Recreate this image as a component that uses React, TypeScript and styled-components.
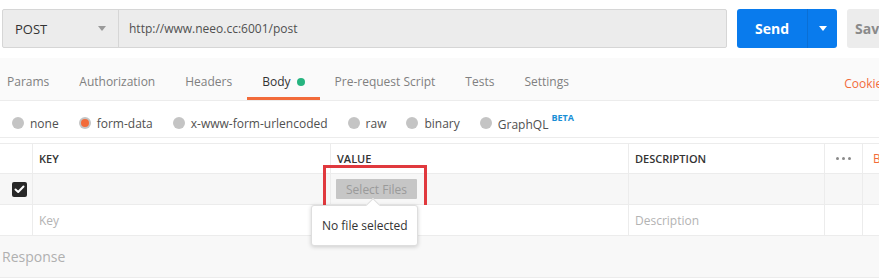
import React from 'react';
import styled, { createGlobalStyle } from 'styled-components';

const GlobalStyle = createGlobalStyle`
  html, body {
    margin: 0;
    padding: 0;
    overflow: hidden;
    background: #ffffff;
    font-family: "Open Sans", "Liberation Sans", sans-serif;
    font-size: 12px;
    color: #505050;
  }
`;

const Page = styled.div`
  width: 879px;
  height: 279px;
  overflow: hidden;
`;

const TopBar = styled.div`
  display: flex;
  align-items: flex-start;
  height: 58px;
  padding: 9px 0 0 2px;
  box-sizing: border-box;
  white-space: nowrap;

  & > * {
    flex-shrink: 0;
  }
`;

const UrlBox = styled.div`
  display: flex;
  width: 725px;
  height: 39px;
  box-sizing: border-box;
  border: 1px solid #d6d6d6;
  border-radius: 2px;
  background: #ececec;
`;

const MethodSelect = styled.div`
  display: flex;
  align-items: center;
  justify-content: space-between;
  width: 116px;
  padding: 0 12px 0 12px;
  box-sizing: border-box;
  border-right: 1px solid #d6d6d6;
  font-size: 13px;
  color: #333;
`;

const Caret = styled.span<{ $color: string }>`
  width: 0;
  height: 0;
  border-left: 4px solid transparent;
  border-right: 4px solid transparent;
  border-top: 5px solid ${(p) => p.$color};
`;

const UrlInput = styled.div`
  display: flex;
  align-items: center;
  padding-left: 10px;
  color: #505050;
`;

const SendButton = styled.div`
  display: flex;
  margin-left: 10px;
  width: 100px;
  height: 39px;
  border-radius: 3px;
  background: #097bed;
  color: #fff;
  overflow: hidden;
`;

const SendLabel = styled.div`
  display: flex;
  align-items: center;
  justify-content: center;
  width: 70px;
  font-size: 14px;
  font-weight: 700;
  border-right: 1px solid #0a6fd5;
`;

const SendArrow = styled.div`
  display: flex;
  flex: 1;
  align-items: center;
  justify-content: center;
`;

const SaveButton = styled.div`
  display: flex;
  align-items: center;
  margin-left: 10px;
  width: 80px;
  height: 39px;
  padding-left: 8px;
  box-sizing: border-box;
  border-radius: 3px;
  background: #ececec;
  color: #8a8a8a;
  font-size: 14px;
  font-weight: 700;
`;

const Tabs = styled.div`
  display: flex;
  height: 43px;
  box-sizing: border-box;
  background: #fafafa;
  border-bottom: 1px solid #ececec;
  white-space: nowrap;
`;

const TabList = styled.div`
  display: flex;
  margin-left: -8px;
`;

const Tab = styled.div<{ $active?: boolean }>`
  display: flex;
  align-items: center;
  gap: 6px;
  padding: 8px 15px 0;
  height: 42px;
  box-sizing: border-box;
  color: ${(p) => (p.$active ? '#333' : '#808080')};
  border-bottom: 3px solid ${(p) => (p.$active ? '#f26b3a' : 'transparent')};
`;

const Dot = styled.span`
  width: 8px;
  height: 8px;
  border-radius: 50%;
  background: #26b47f;
`;

const Cookies = styled.div`
  margin-left: auto;
  padding-top: 8px;
  display: flex;
  align-items: center;
  color: #f26b3a;
  margin-right: -9px;
`;

const RadioRow = styled.div`
  display: flex;
  align-items: center;
  gap: 20px;
  height: 37px;
  padding: 8px 0 0 12px;
  box-sizing: border-box;
  border-bottom: 1px solid #ececec;
  color: #505050;
  white-space: nowrap;
`;

const RadioItem = styled.label`
  display: flex;
  align-items: center;
  gap: 6px;
`;

const RadioCircle = styled.span<{ $checked?: boolean }>`
  display: flex;
  align-items: center;
  justify-content: center;
  width: 12px;
  height: 12px;
  border-radius: 50%;
  background: #c4c4c4;

  &::after {
    content: '';
    width: 8px;
    height: 8px;
    border-radius: 50%;
    background: ${(p) => (p.$checked ? '#f26b3a' : 'transparent')};
  }
`;

const Beta = styled.sup`
  margin-left: 3px;
  font-size: 9px;
  font-weight: 700;
  color: #1a8fd6;
  position: relative;
  top: -3px;
`;

const Table = styled.div`
  margin-top: 5px;
  display: grid;
  grid-template-columns: 32px 298px 298px 196px 38px 1fr;
  grid-template-rows: 30px 31px 31px;
  border-top: 1px solid #ececec;
`;

const Cell = styled.div<{ $first?: boolean; $shade?: boolean }>`
  position: relative;
  display: flex;
  align-items: center;
  padding-left: 6px;
  box-sizing: border-box;
  border-bottom: 1px solid #ececec;
  border-left: ${(p) => (p.$first ? 'none' : '1px solid #ececec')};
  background: ${(p) => (p.$shade ? '#f7f7f7' : '#ffffff')};
  white-space: nowrap;
`;

const HeadText = styled.span`
  font-size: 11px;
  font-weight: 600;
  color: #333;
`;

const Placeholder = styled.span`
  color: #b3b3b3;
`;

const Checkbox = styled.span`
  display: flex;
  align-items: center;
  justify-content: center;
  margin-left: 6px;
  width: 15px;
  height: 15px;
  border-radius: 2px;
  background: #282828;
`;

const Dots = styled.div`
  display: flex;
  gap: 3px;
  margin: 0 auto;
  transform: translateX(-3px);

  span {
    width: 3px;
    height: 3px;
    border-radius: 50%;
    background: #8a8a8a;
  }
`;

const BulkEdit = styled.span`
  color: #f26b3a;
  padding-left: 4px;
`;

const FileButton = styled.div`
  display: flex;
  align-items: center;
  justify-content: center;
  width: 81px;
  height: 20px;
  margin-left: -1px;
  background: #c6c6c6;
  color: #9a9a9a;
  border-radius: 1px;
`;

const Highlight = styled.div`
  position: absolute;
  left: -8px;
  top: -9px;
  width: 104px;
  height: 44px;
  box-sizing: border-box;
  border: 3px solid #e0393e;
`;

const Tooltip = styled.div`
  position: absolute;
  left: -20px;
  top: 31px;
  width: 107px;
  height: 41px;
  box-sizing: border-box;
  display: flex;
  align-items: center;
  padding-left: 10px;
  background: #fff;
  color: #333;
  border: 1px solid #dedede;
  border-radius: 3px;
  box-shadow: 0 1px 4px rgba(0, 0, 0, 0.18);
  z-index: 2;

  &::before {
    content: '';
    position: absolute;
    left: 56px;
    top: -6px;
    width: 9px;
    height: 9px;
    background: #fff;
    border-left: 1px solid #dedede;
    border-top: 1px solid #dedede;
    transform: rotate(45deg);
  }
`;

const Response = styled.div`
  display: flex;
  align-items: center;
  height: 42px;
  padding: 0 0 0 2px;
  box-sizing: border-box;
  background: #f8f8f8;
  border-bottom: 1px solid #ececec;
  font-size: 14px;
  color: #b0b0b0;
`;

const tabs = ['Params', 'Authorization', 'Headers', 'Body', 'Pre-request Script', 'Tests', 'Settings'];
const bodyTypes = ['none', 'form-data', 'x-www-form-urlencoded', 'raw', 'binary', 'GraphQL'];

export default function App() {
  return (
    <Page>
      <GlobalStyle />
      <TopBar>
        <UrlBox>
          <MethodSelect>
            POST
            <Caret $color="#9a9a9a" />
          </MethodSelect>
          <UrlInput>http://www.neeo.cc:6001/post</UrlInput>
        </UrlBox>
        <SendButton>
          <SendLabel>Send</SendLabel>
          <SendArrow>
            <Caret $color="#ffffff" />
          </SendArrow>
        </SendButton>
        <SaveButton>Save</SaveButton>
      </TopBar>

      <Tabs>
        <TabList>
          {tabs.map((t) => (
            <Tab key={t} $active={t === 'Body'}>
              {t}
              {t === 'Body' && <Dot />}
            </Tab>
          ))}
        </TabList>
        <Cookies>Cookies</Cookies>
      </Tabs>

      <RadioRow>
        {bodyTypes.map((b) => (
          <RadioItem key={b}>
            <RadioCircle $checked={b === 'form-data'} />
            <span>
              {b}
              {b === 'GraphQL' && <Beta>BETA</Beta>}
            </span>
          </RadioItem>
        ))}
      </RadioRow>

      <Table>
        <Cell $first />
        <Cell><HeadText>KEY</HeadText></Cell>
        <Cell><HeadText>VALUE</HeadText></Cell>
        <Cell><HeadText>DESCRIPTION</HeadText></Cell>
        <Cell>
          <Dots>
            <span />
            <span />
            <span />
          </Dots>
        </Cell>
        <Cell><BulkEdit>Bulk Edit</BulkEdit></Cell>

        <Cell $first $shade>
          <Checkbox>
            <svg width="11" height="9" viewBox="0 0 11 9">
              <path d="M1.5 4.5 L4.2 7 L9.5 1.5" fill="none" stroke="#fff" strokeWidth="2" strokeLinecap="round" strokeLinejoin="round" />
            </svg>
          </Checkbox>
        </Cell>
        <Cell $shade />
        <Cell $shade>
          <FileButton>Select Files</FileButton>
          <Highlight />
          <Tooltip>No file selected</Tooltip>
        </Cell>
        <Cell $shade />
        <Cell $shade />
        <Cell $shade />

        <Cell $first />
        <Cell><Placeholder>Key</Placeholder></Cell>
        <Cell />
        <Cell><Placeholder>Description</Placeholder></Cell>
        <Cell />
        <Cell />
      </Table>

      <Response>Response</Response>
    </Page>
  );
}
